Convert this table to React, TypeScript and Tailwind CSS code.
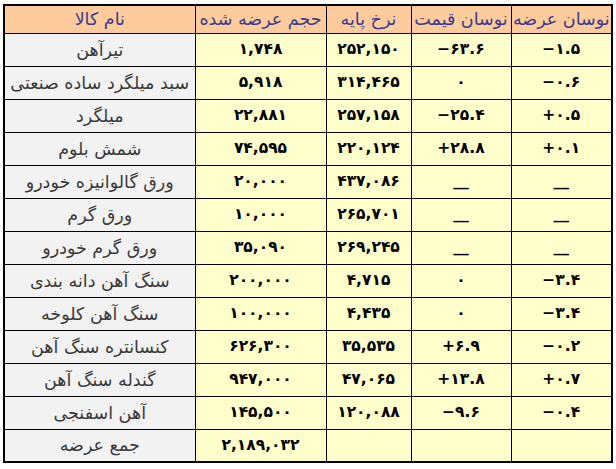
const rows = [
  { name: 'تیرآهن', vol: '۱,۷۴۸', rate: '۲۵۲,۱۵۰', price: '−۶۳.۶', supply: '−۱.۵' },
  { name: 'سبد میلگرد ساده صنعتی', vol: '۵,۹۱۸', rate: '۳۱۴,۴۶۵', price: '۰', supply: '−۰.۶' },
  { name: 'میلگرد', vol: '۲۲,۸۸۱', rate: '۲۵۷,۱۵۸', price: '−۲۵.۴', supply: '+۰.۵' },
  { name: 'شمش بلوم', vol: '۷۴,۵۹۵', rate: '۲۲۰,۱۲۴', price: '+۲۸.۸', supply: '+۰.۱' },
  { name: 'ورق گالوانیزه خودرو', vol: '۲۰,۰۰۰', rate: '۴۳۷,۰۸۶', price: '__', supply: '__' },
  { name: 'ورق گرم', vol: '۱۰,۰۰۰', rate: '۲۶۵,۷۰۱', price: '__', supply: '__' },
  { name: 'ورق گرم خودرو', vol: '۳۵,۰۹۰', rate: '۲۶۹,۲۴۵', price: '__', supply: '__' },
  { name: 'سنگ آهن دانه بندی', vol: '۲۰۰,۰۰۰', rate: '۴,۷۱۵', price: '۰', supply: '−۳.۴' },
  { name: 'سنگ آهن کلوخه', vol: '۱۰۰,۰۰۰', rate: '۴,۴۳۵', price: '۰', supply: '−۳.۴' },
  { name: 'کنسانتره سنگ آهن', vol: '۶۲۶,۳۰۰', rate: '۳۵,۵۳۵', price: '+۶.۹', supply: '−۰.۲' },
  { name: 'گندله سنگ آهن', vol: '۹۴۷,۰۰۰', rate: '۴۷,۰۶۵', price: '+۱۳.۸', supply: '+۰.۷' },
  { name: 'آهن اسفنجی', vol: '۱۴۵,۵۰۰', rate: '۱۲۰,۰۸۸', price: '−۹.۶', supply: '−۰.۴' },
  { name: 'جمع عرضه', vol: '۲,۱۸۹,۰۳۲', rate: '', price: '', supply: '' },
];

const headers = ['نام کالا', 'حجم عرضه شده', 'نرخ پایه', 'نوسان قیمت', 'نوسان عرضه'];

export default function App() {
  return (
    <div className="w-[616px] h-[469px] bg-white pl-[3px] pt-[4px]" style={{ fontFamily: '"DejaVu Sans", sans-serif' }}>
      <table className="table-fixed border-collapse border-2 border-black w-[608px]" dir="ltr">
        <colgroup>
          <col className="w-[191px]" />
          <col className="w-[131px]" />
          <col className="w-[85px]" />
          <col className="w-[100px]" />
          <col className="w-[101px]" />
        </colgroup>
        <thead>
          <tr className="h-[28px] bg-[#fdcb9c]">
            {headers.map((h) => (
              <th key={h} className="border border-black p-0 text-[17.5px] leading-[26px] font-normal text-[#3b3a8c] whitespace-nowrap" dir="rtl">
                {h}
              </th>
            ))}
          </tr>
        </thead>
        <tbody>
          {rows.map((r) => (
            <tr key={r.name} className="h-[33px]">
              <td className="border border-black bg-[#f2f2f2] text-center text-[17.5px] leading-[30px] text-[#3a3a3a] p-0 whitespace-nowrap" dir="rtl">
                {r.name}
              </td>
              <td className="border border-black bg-[#ffffcc] text-center text-[15.5px] font-bold p-0">{r.vol}</td>
              <td className="border border-black bg-[#ffffcc] text-center text-[15.5px] font-bold p-0">{r.rate}</td>
              <td className="border border-black bg-[#ffffcc] text-center text-[15.5px] font-bold p-0">{r.price}</td>
              <td className="border border-black bg-[#ffffcc] text-center text-[15.5px] font-bold p-0">{r.supply}</td>
            </tr>
          ))}
        </tbody>
      </table>
    </div>
  );
}
